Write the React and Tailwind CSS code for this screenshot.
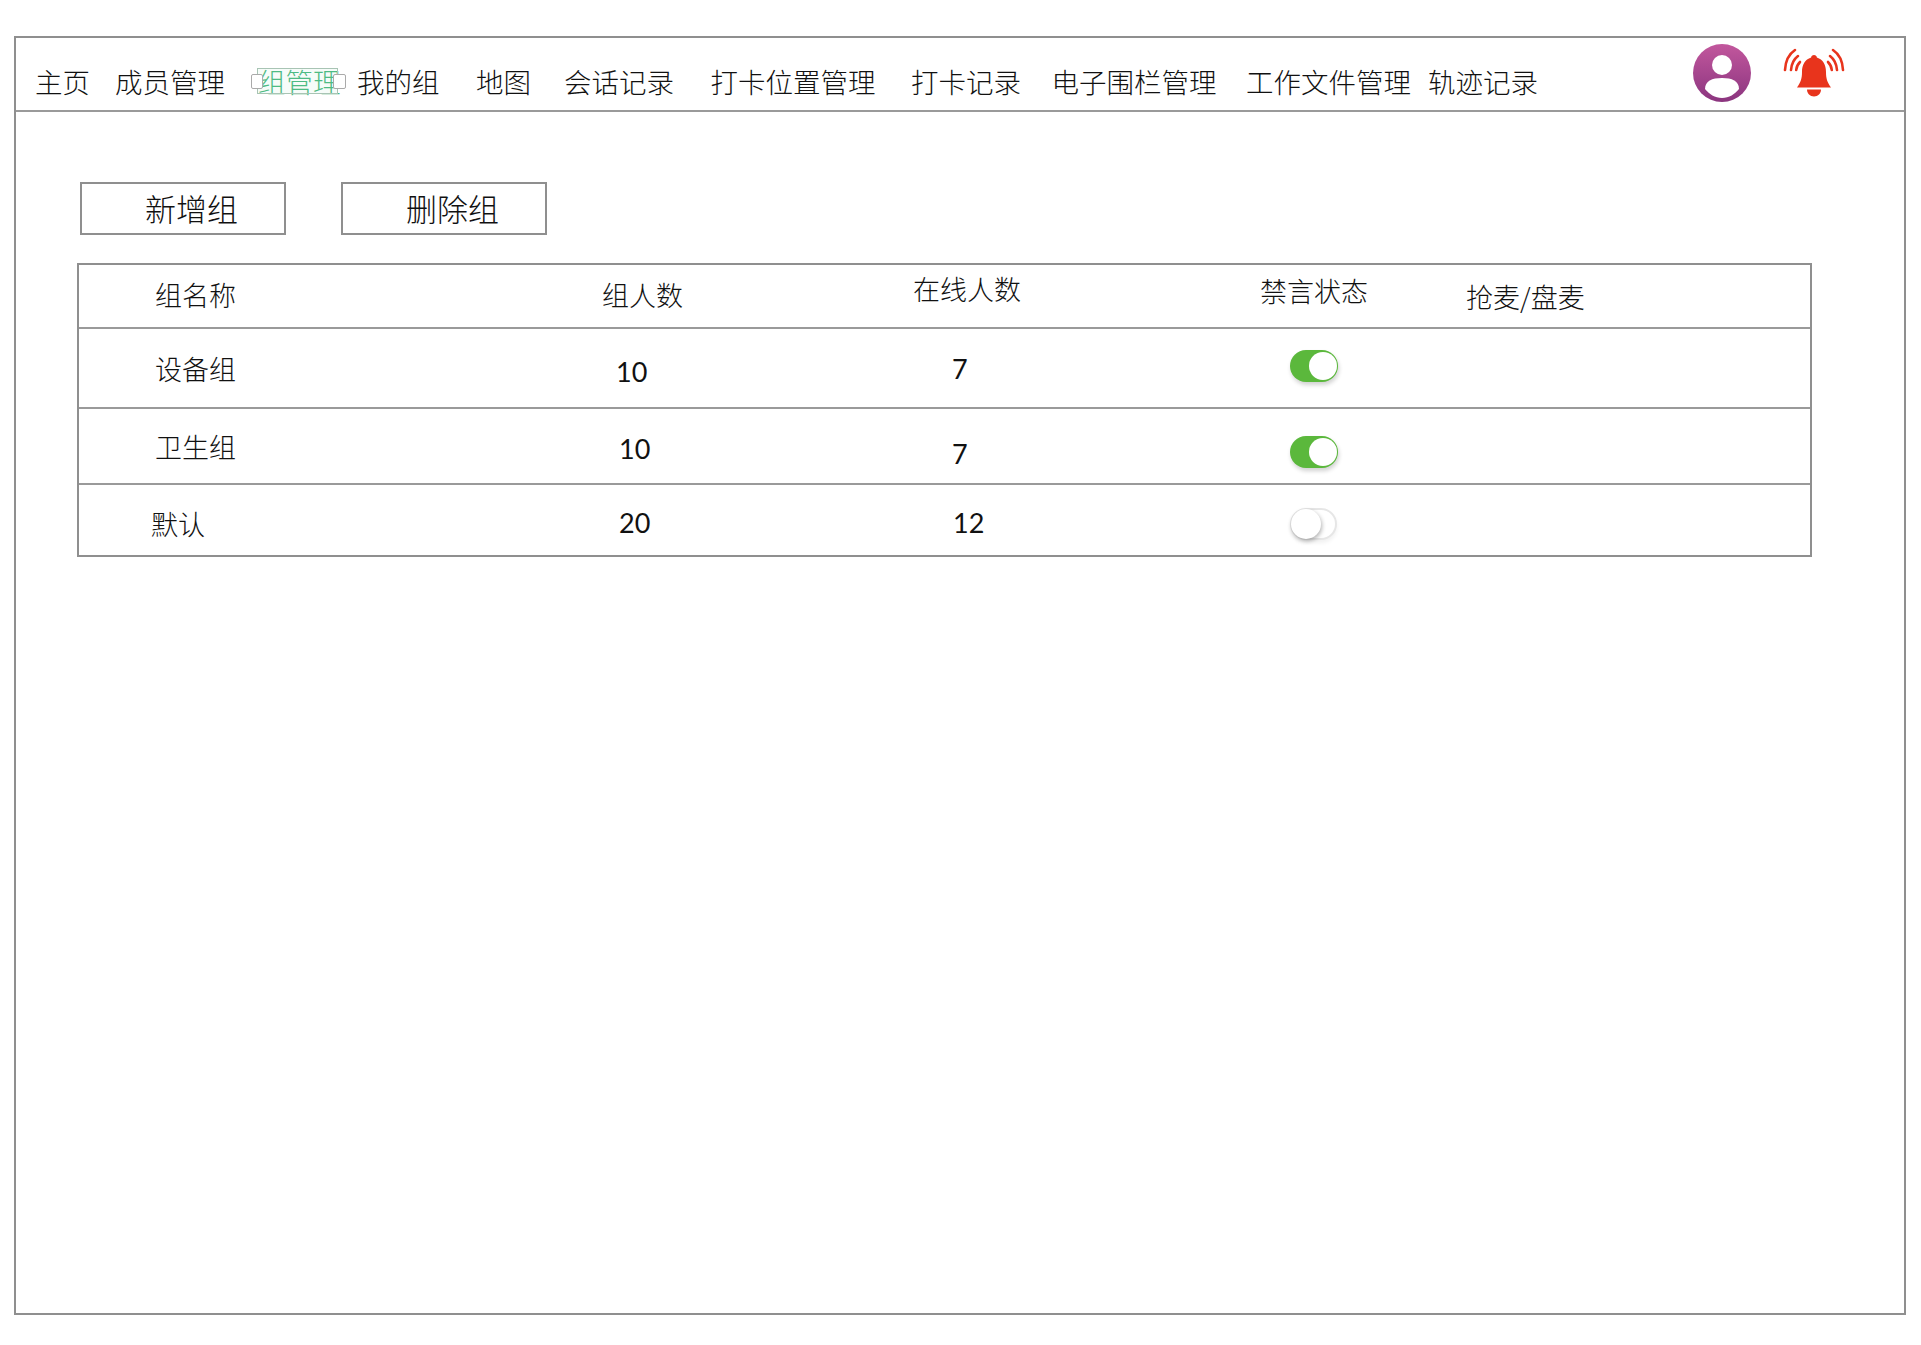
import { useId } from 'react';

const FONT = 'font-["Noto_Sans_CJK_SC","Lato",sans-serif]';

const NAV_ITEMS = [
  { label: '主页', className: 'ml-[19px]' },
  { label: '成员管理', className: 'ml-[25px]' },
  { label: '组管理', className: 'ml-[33px] text-[#4fbb84] relative', selected: true },
  { label: '我的组', className: 'ml-[16.5px]' },
  { label: '地图', className: 'ml-[36.5px]' },
  { label: '会话记录', className: 'ml-[33px]' },
  { label: '打卡位置管理', className: 'ml-[36.5px]' },
  { label: '打卡记录', className: 'ml-[35.5px]' },
  { label: '电子围栏管理', className: 'ml-[30.5px]' },
  { label: '工作文件管理', className: 'ml-[29.5px]' },
  { label: '轨迹记录', className: 'ml-[17px]' },
];

const ROWS = [
  {
    name: '设备组', nameCls: 'mt-[2px]', rowCls: 'h-[80px] border-b-2',
    count: '10', countCls: 'ml-[14px] mt-[7px]',
    online: '7', onlineCls: 'ml-[39px] mt-[2px]',
    on: true, toggleCls: 'ml-[30px] -mt-[4px]',
  },
  {
    name: '卫生组', nameCls: 'mt-[2px]', rowCls: 'h-[76px] border-b-2',
    count: '10', countCls: 'ml-[17px] mt-[6px]',
    online: '7', onlineCls: 'ml-[39px] mt-[16px]',
    on: true, toggleCls: 'ml-[30px] mt-[12px]',
  },
  {
    name: '默认', nameCls: '-ml-[4px] mt-[7px]', rowCls: 'h-[70px]',
    count: '20', countCls: 'ml-[17px] mt-[5px]',
    online: '12', onlineCls: 'ml-[40px] mt-[5px]',
    on: false, toggleCls: 'ml-[30px] mt-[7px]',
  },
];

const COLS = 'grid grid-cols-[447px_311px_347px_206px_1fr] items-center pl-[76px]';

function Avatar() {
  const id = useId();
  return (
    <svg width="58" height="58" viewBox="0 0 58 58">
      <defs>
        <linearGradient id={id} x1="0" y1="0" x2="0" y2="1">
          <stop offset="0" stopColor="#c2579d" />
          <stop offset="1" stopColor="#8b357f" />
        </linearGradient>
      </defs>
      <circle cx="29" cy="29" r="29" fill={`url(#${id})`} />
      <circle cx="29" cy="21" r="10" fill="#fff" />
      <path d="M12 45c0-8 7-11 17-11s17 3 17 11c-4 5-10 9-17 9s-13-4-17-9z" fill="#fff" />
    </svg>
  );
}

function Bell() {
  return (
    <svg width="62" height="52" viewBox="0 0 62 52" fill="none" stroke="#e8341c" strokeWidth="2.6" strokeLinecap="round">
      <path d="M31 7c-1.600 0-2.800 1-2.900 2.600C22 11.500 19 17 19 24c0 6-1 10-5 15.500h34C44 34 43 30 43 24c0-7-3-12.500-9.100-14.400C33.800 8 32.600 7 31 7z" fill="#e8341c" stroke="none" />
      <path d="M24 41.500h14c0 4-3 7-7 7s-7-3-7-7z" fill="#e8341c" stroke="none" />
      <path d="M12 2C6 6 2.500 12 2 22" />
      <path d="M15 8C11 11 8.500 15.500 8 22" />
      <path d="M17 14c-2 2-3.500 4.500-3.800 8" />
      <path d="M50 2c6 4 9.500 10 10 20" />
      <path d="M47 8c4 3 6.500 7.500 7 14" />
      <path d="M45 14c2 2 3.500 4.500 3.800 8" />
    </svg>
  );
}

function Toggle({ on, className }) {
  if (on) {
    return (
      <div className={`relative w-[48px] h-[32px] rounded-full bg-[#5bb83c] shadow-[1px_3px_4px_rgba(0,0,0,0.18)] ${className}`}>
        <div className="absolute right-[1px] top-[2px] w-[28px] h-[28px] rounded-full bg-white" />
      </div>
    );
  }
  return (
    <div className={`relative w-[47px] h-[32px] rounded-full bg-white border-2 border-[#e6e6e6] shadow-[0_3px_4px_rgba(0,0,0,0.06)] ${className}`}>
      <div className="absolute -left-[1px] -top-[1px] w-[30px] h-[30px] rounded-full bg-white shadow-[1px_2px_4px_rgba(0,0,0,0.3)]" />
    </div>
  );
}

export default function App() {
  return (
    <div className={`w-[1921px] h-[1345px] bg-white pt-[36px] pl-[14px] text-[27px] leading-[36px] text-[#111111] font-light ${FONT}`}>
      <div className="w-[1892px] h-[1279px] border-2 border-[#8f8f8f]">

        {/* top bar */}
        <div className="flex h-[74px] border-b-2 border-[#9a9a9a]">
          <div className="flex items-end pb-[11px] text-[27.5px]">
            {NAV_ITEMS.map(item => (
              <span key={item.label} className={`whitespace-nowrap ${item.className}`}>
                {item.label}
                {item.selected && (
                  <>
                    <span className="absolute -left-[1px] top-[5px] w-[81px] h-[26px] border border-[#a8c4b4] bg-[#55c08a]/5" />
                    <span className="absolute -left-[7px] top-[11px] w-[12px] h-[15px] rounded-[2px] border border-[#aaaaaa] bg-white" />
                    <span className="absolute left-[75px] top-[11px] w-[13px] h-[15px] rounded-[2px] border border-[#aaaaaa] bg-white" />
                  </>
                )}
              </span>
            ))}
          </div>
          <div className="ml-[155px] mt-[6px]"><Avatar /></div>
          <div className="ml-[32px] mt-[10px]"><Bell /></div>
        </div>

        {/* actions */}
        <div className="flex gap-[55px] ml-[64px] mt-[70px]">
          <div className="w-[206px] h-[53px] border-2 border-[#8f8f8f] pl-[63px] text-[31px] leading-[47px]">新增组</div>
          <div className="w-[206px] h-[53px] border-2 border-[#8f8f8f] pl-[63px] text-[31px] leading-[47px]">删除组</div>
        </div>

        {/* group table */}
        <div className="ml-[61px] mt-[28px] w-[1735px] border-2 border-[#8f8f8f]">
          <div className={`${COLS} h-[64px] border-b-2 border-[#9a9a9a]`}>
            <span className="-mt-[2px]">组名称</span>
            <span className="-mt-[3px]">组人数</span>
            <span className="-mt-[15px]">在线人数</span>
            <span className="-mt-[10px]">禁言状态</span>
            <span className="mt-[2px]">抢麦/盘麦</span>
          </div>
          {ROWS.map(row => (
            <div key={row.name} className={`${COLS} ${row.rowCls} border-[#9a9a9a]`}>
              <span className={row.nameCls}>{row.name}</span>
              <span className={`font-['Lato'] font-normal ${row.countCls}`}>{row.count}</span>
              <span className={`font-['Lato'] font-normal ${row.onlineCls}`}>{row.online}</span>
              <Toggle on={row.on} className={row.toggleCls} />
              <span />
            </div>
          ))}
        </div>

      </div>
    </div>
  );
}
